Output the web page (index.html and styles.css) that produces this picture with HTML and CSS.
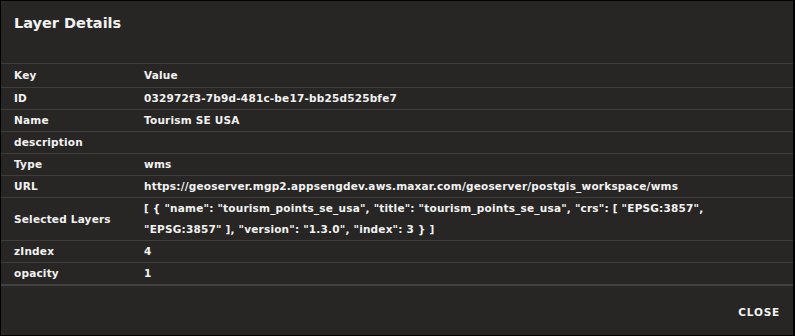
FILE: index.html
```html
<!DOCTYPE html>
<html lang="en">
<head>
  <meta charset="UTF-8" />
  <meta name="viewport" content="width=device-width, initial-scale=1.0"/>
  <title>Layer Details</title>
  <link rel="stylesheet" href="styles.css">
</head>
<body>
  <div class="dialog">
    <h2 class="dialog-title">Layer Details</h2>

    <table class="details">
      <thead>
        <tr>
          <th>Key</th>
          <th>Value</th>
        </tr>
      </thead>
      <tbody>
        <tr><td>ID</td><td>032972f3-7b9d-481c-be17-bb25d525bfe7</td></tr>
        <tr><td>Name</td><td>Tourism SE USA</td></tr>
        <tr><td>description</td><td></td></tr>
        <tr><td>Type</td><td>wms</td></tr>
        <tr><td>URL</td><td>https://geoserver.mgp2.appsengdev.aws.maxar.com/geoserver/postgis_workspace/wms</td></tr>
        <tr><td>Selected Layers</td><td>[ { "name": "tourism_points_se_usa", "title": "tourism_points_se_usa", "crs": [ "EPSG:3857", "EPSG:3857" ], "version": "1.3.0", "index": 3 } ]</td></tr>
        <tr><td>zIndex</td><td>4</td></tr>
        <tr><td>opacity</td><td>1</td></tr>
      </tbody>
    </table>

    <div class="dialog-actions">
      <button class="btn-close">Close</button>
    </div>
  </div>
</body>
</html>
```

FILE: styles.css
```css
body {
  margin: 0;
  background-color: #000;
  font-family: 'DejaVu Sans', 'Liberation Sans', sans-serif;
  color: #f2f2f2;
}

.dialog {
  box-sizing: border-box;
  width: 795px;
  height: 336px;
  border: 1px solid #000;
  border-right-width: 2px;
  background-color: #272624;
}

.dialog-title {
  margin: 0;
  height: 62px;
  padding: 14px 0 0 13px;
  box-sizing: border-box;
  font-size: 14.5px;
  font-weight: 700;
}

.details {
  width: 100%;
  border-collapse: collapse;
  font-size: 10.5px;
  font-weight: 700;
  letter-spacing: 0.2px;
}

.details th,
.details td {
  text-align: left;
  vertical-align: middle;
  padding: 0 13px;
  line-height: 21px;
  border-top: 1px solid #3f3e3c;
}

.details th {
  height: 23px;
}

.details th:first-child,
.details td:first-child {
  width: 104px;
}

.details td:last-child {
  padding-right: 40px;
}

.details tbody tr:last-child td {
  border-bottom: 2px solid #434240;
}

.dialog-actions {
  display: flex;
  justify-content: flex-end;
  padding: 14px 13px 0 0;
}

.btn-close {
  background: none;
  border: none;
  color: #f2f2f2;
  font-family: inherit;
  font-size: 10.5px;
  font-weight: 700;
  letter-spacing: 0.8px;
  text-transform: uppercase;
  padding: 6px 0;
  cursor: pointer;
}
```
